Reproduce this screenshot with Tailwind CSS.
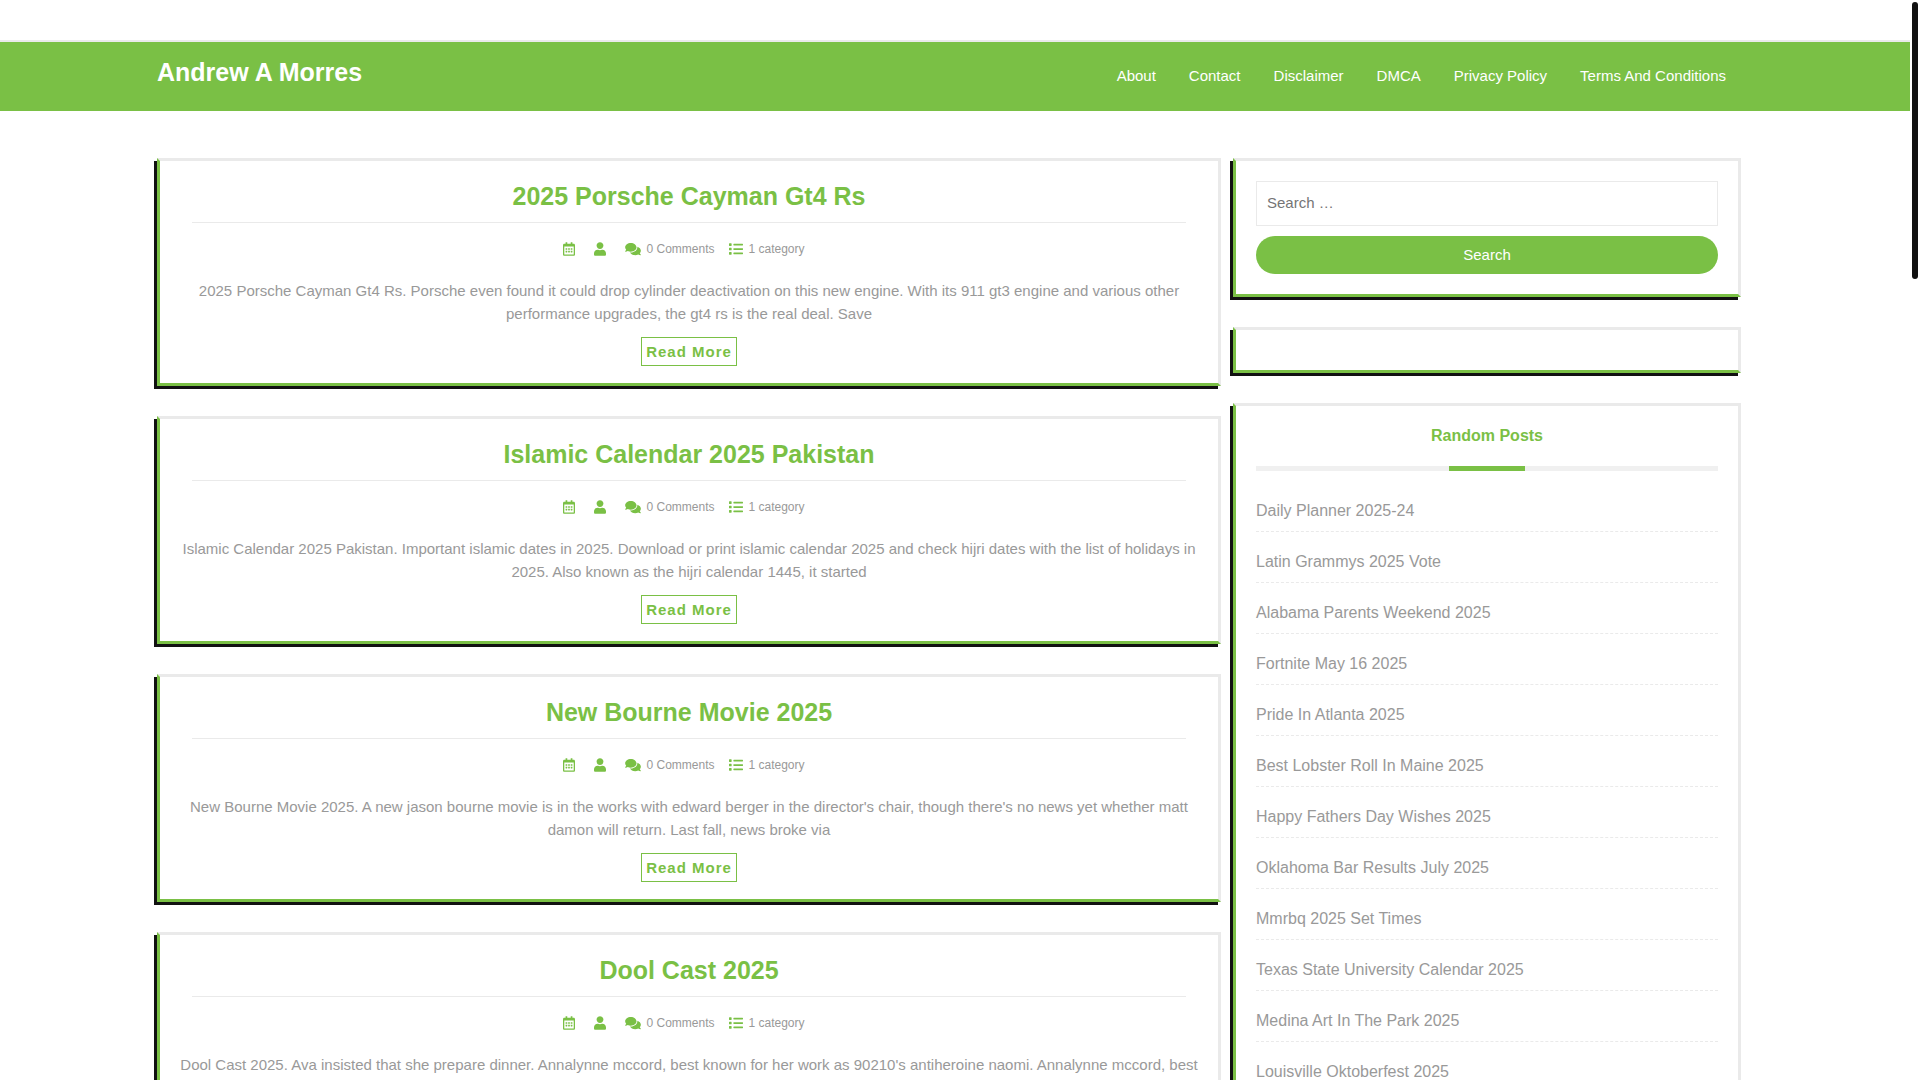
<!DOCTYPE html>
<html lang="en">
<head>
    <meta charset="UTF-8">
    <meta name="viewport" content="width=device-width, initial-scale=1">
    <title>Andrew A Morres</title>
    <script src="https://cdn.jsdelivr.net/npm/@tailwindcss/browser@4"></script>
</head>
<body class="h-screen overflow-hidden bg-white pr-[10px] font-['Liberation_Sans',Arial,sans-serif] text-[15px] text-[#999]">
<!-- icon sprite -->
<svg class="hidden" xmlns="http://www.w3.org/2000/svg">
    <symbol id="i-calendar" viewBox="0 0 448 512"><path d="M148 288h-40c-6.600 0-12-5.400-12-12v-40c0-6.600 5.400-12 12-12h40c6.600 0 12 5.400 12 12v40c0 6.600-5.400 12-12 12zm108-12v-40c0-6.600-5.400-12-12-12h-40c-6.600 0-12 5.400-12 12v40c0 6.600 5.400 12 12 12h40c6.600 0 12-5.400 12-12zm96 0v-40c0-6.600-5.400-12-12-12h-40c-6.600 0-12 5.400-12 12v40c0 6.600 5.400 12 12 12h40c6.600 0 12-5.400 12-12zm-96 96v-40c0-6.600-5.400-12-12-12h-40c-6.600 0-12 5.400-12 12v40c0 6.600 5.400 12 12 12h40c6.600 0 12-5.400 12-12zm-96 0v-40c0-6.600-5.400-12-12-12h-40c-6.600 0-12 5.400-12 12v40c0 6.600 5.400 12 12 12h40c6.600 0 12-5.400 12-12zm192 0v-40c0-6.600-5.400-12-12-12h-40c-6.600 0-12 5.400-12 12v40c0 6.600 5.400 12 12 12h40c6.600 0 12-5.400 12-12zm96-260v352c0 26.500-21.500 48-48 48H48c-26.500 0-48-21.500-48-48V112c0-26.500 21.500-48 48-48h48V12c0-6.600 5.400-12 12-12h40c6.600 0 12 5.400 12 12v52h128V12c0-6.600 5.400-12 12-12h40c6.600 0 12 5.400 12 12v52h48c26.500 0 48 21.500 48 48zm-48 346V160H48v298c0 3.300 2.700 6 6 6h340c3.300 0 6-2.700 6-6z"/></symbol>
    <symbol id="i-user" viewBox="0 0 448 512"><path d="M224 256c70.700 0 128-57.300 128-128S294.700 0 224 0 96 57.300 96 128s57.300 128 128 128zm89.600 32h-16.700c-22.200 10.200-46.900 16-72.900 16s-50.600-5.800-72.900-16h-16.700C60.200 288 0 348.200 0 422.400V464c0 26.500 21.500 48 48 48h352c26.500 0 48-21.500 48-48v-41.600c0-74.200-60.200-134.400-134.400-134.400z"/></symbol>
    <symbol id="i-comments" viewBox="0 0 576 512"><path d="M416 192c0-88.400-93.100-160-208-160S0 103.600 0 192c0 34.300 14.100 65.900 38 92-13.400 30.200-35.500 54.200-35.800 54.500-2.200 2.300-2.800 5.700-1.500 8.700S4.800 352 8 352c36.600 0 66.900-12.300 88.700-25 32.200 15.700 70.300 25 111.300 25 114.900 0 208-71.600 208-160zm122 220c23.900-26 38-57.700 38-92 0-66.900-53.500-124.200-129.300-148.100.9 6.600 1.300 13.300 1.300 20.100 0 105.900-107.700 192-240 192-10.800 0-21.300-.8-31.700-1.900C207.800 439.600 281.800 480 368 480c41 0 79.100-9.200 111.300-25 21.800 12.700 52.100 25 88.700 25 3.200 0 6.100-1.900 7.300-4.800 1.300-2.900.7-6.300-1.500-8.700-.3-.3-22.400-24.200-35.800-54.500z"/></symbol>
    <symbol id="i-list" viewBox="0 0 512 512"><path d="M80 368H16a16 16 0 0 0-16 16v64a16 16 0 0 0 16 16h64a16 16 0 0 0 16-16v-64a16 16 0 0 0-16-16zm0-320H16A16 16 0 0 0 0 64v64a16 16 0 0 0 16 16h64a16 16 0 0 0 16-16V64a16 16 0 0 0-16-16zm0 160H16a16 16 0 0 0-16 16v64a16 16 0 0 0 16 16h64a16 16 0 0 0 16-16v-64a16 16 0 0 0-16-16zm416 176H176a16 16 0 0 0-16 16v32a16 16 0 0 0 16 16h320a16 16 0 0 0 16-16v-32a16 16 0 0 0-16-16zm0-320H176a16 16 0 0 0-16 16v32a16 16 0 0 0 16 16h320a16 16 0 0 0 16-16V80a16 16 0 0 0-16-16zm0 160H176a16 16 0 0 0-16 16v32a16 16 0 0 0 16 16h320a16 16 0 0 0 16-16v-32a16 16 0 0 0-16-16z"/></symbol>
</svg>

<header class="pt-10">
    <div class="flex items-center justify-between border-t-2 border-[#eaeaea] bg-[#7ac045] pt-4 pr-[184px] pb-[17px] pl-[157px] text-white">
        <h1 class="-mt-1 mb-1 text-[25px] leading-9 font-bold"><a href="#">Andrew A Morres</a></h1>
        <nav class="flex gap-[33px]">
            <a href="#">About</a>
            <a href="#">Contact</a>
            <a href="#">Disclaimer</a>
            <a href="#">DMCA</a>
            <a href="#">Privacy Policy</a>
            <a href="#">Terms And Conditions</a>
        </nav>
    </div>
</header>

<div class="grid grid-cols-[266fr_127fr] gap-3 pt-[47px] pr-[169px] pl-[157px]">
    <main id="posts" class="flex flex-col gap-[30px]"></main>

    <aside class="flex flex-col gap-[30px]">
        <section class="border-3 border-t-[#eaeaea] border-r-[#eaeaea] border-b-[#7ac045] border-l-[#7ac045] p-5 shadow-[-3px_3px_0_#111]">
            <form class="flex flex-col gap-[10px]" onsubmit="return false">
                <label class="sr-only" for="s">Search for:</label>
                <input id="s" type="search" placeholder="Search …" class="h-[45px] border border-[#eaeaea] px-[10px] pb-[2px] placeholder:text-[#757575]">
                <button type="submit" class="h-[38px] rounded-[20px] bg-[#7ac045] text-white">Search</button>
            </form>
        </section>
        <section class="border-3 border-t-[#eaeaea] border-r-[#eaeaea] border-b-[#7ac045] border-l-[#7ac045] p-5 shadow-[-3px_3px_0_#111]"></section>
        <section class="border-3 border-t-[#eaeaea] border-r-[#eaeaea] border-b-[#7ac045] border-l-[#7ac045] p-5 shadow-[-3px_3px_0_#111]">
            <h2 class="text-center text-base leading-5 font-bold text-[#7ac045]">Random Posts</h2>
            <div class="mt-5 flex h-[5px] justify-center bg-[#f0f0f0]"><span class="w-1/6 bg-[#7ac045]"></span></div>
            <ul id="random" class="pt-[10px] text-base"></ul>
        </section>
    </aside>
</div>

<!-- scroll thumb -->
<div class="fixed top-[2px] right-[2px] h-[277px] w-[6px] rounded-full bg-[#111]"></div>

<script>
    const posts = [
        ["2025 Porsche Cayman Gt4 Rs", "2025 Porsche Cayman Gt4 Rs. Porsche even found it could drop cylinder deactivation on this new engine. With its 911 gt3 engine and various other performance upgrades, the gt4 rs is the real deal. Save"],
        ["Islamic Calendar 2025 Pakistan", "Islamic Calendar 2025 Pakistan. Important islamic dates in 2025. Download or print islamic calendar 2025 and check hijri dates with the list of holidays in 2025. Also known as the hijri calendar 1445, it started"],
        ["New Bourne Movie 2025", "New Bourne Movie 2025. A new jason bourne movie is in the works with edward berger in the director's chair, though there's no news yet whether matt damon will return. Last fall, news broke via"],
        ["Dool Cast 2025", "Dool Cast 2025. Ava insisted that she prepare dinner. Annalynne mccord, best known for her work as 90210's antiheroine naomi. Annalynne mccord, best"]
    ];
    const random = ["Daily Planner 2025-24", "Latin Grammys 2025 Vote", "Alabama Parents Weekend 2025", "Fortnite May 16 2025", "Pride In Atlanta 2025", "Best Lobster Roll In Maine 2025", "Happy Fathers Day Wishes 2025", "Oklahoma Bar Results July 2025", "Mmrbq 2025 Set Times", "Texas State University Calendar 2025", "Medina Art In The Park 2025", "Louisville Oktoberfest 2025"];

    document.getElementById("posts").innerHTML = posts.map(([title, text]) => `
        <article class="border-3 border-t-[#eaeaea] border-r-[#eaeaea] border-b-[#7ac045] border-l-[#7ac045] px-8 pt-5 pb-[17px] text-center shadow-[-3px_3px_0_#111]">
            <h2 class="border-b border-[#eaeaea] pb-[11px] text-[25px] leading-[30px] font-bold text-[#7ac045]"><a href="#">${title}</a></h2>
            <div class="mt-4 flex h-5 items-center justify-center pr-[10px] text-xs">
                <svg class="mr-[19px] h-[14px] w-3 fill-[#7ac045]"><use href="#i-calendar"/></svg>
                <svg class="mr-[19px] h-[14px] w-3 fill-[#7ac045]"><use href="#i-user"/></svg>
                <svg class="mr-[5px] h-[14px] w-4 fill-[#7ac045]"><use href="#i-comments"/></svg>
                <a href="#" class="mr-[15px] leading-5">0 Comments</a>
                <svg class="mr-[5px] h-[14px] w-[14px] fill-[#7ac045]"><use href="#i-list"/></svg>
                <a href="#" class="leading-5">1 category</a>
            </div>
            <p class="-mx-4 mt-5 leading-[23px]">${text}</p>
            <a href="#" class="mt-3 inline-block border border-[#7ac045] px-1 leading-[27px] font-bold tracking-[1px] text-[#7ac045]">Read More</a>
        </article>`).join("");

    document.getElementById("random").innerHTML = random.map(t =>
        `<li class="border-b border-dashed border-[#eaeaea] pt-[18px] pb-2 leading-6"><a href="#">${t}</a></li>`).join("");
</script>
</body>
</html>
